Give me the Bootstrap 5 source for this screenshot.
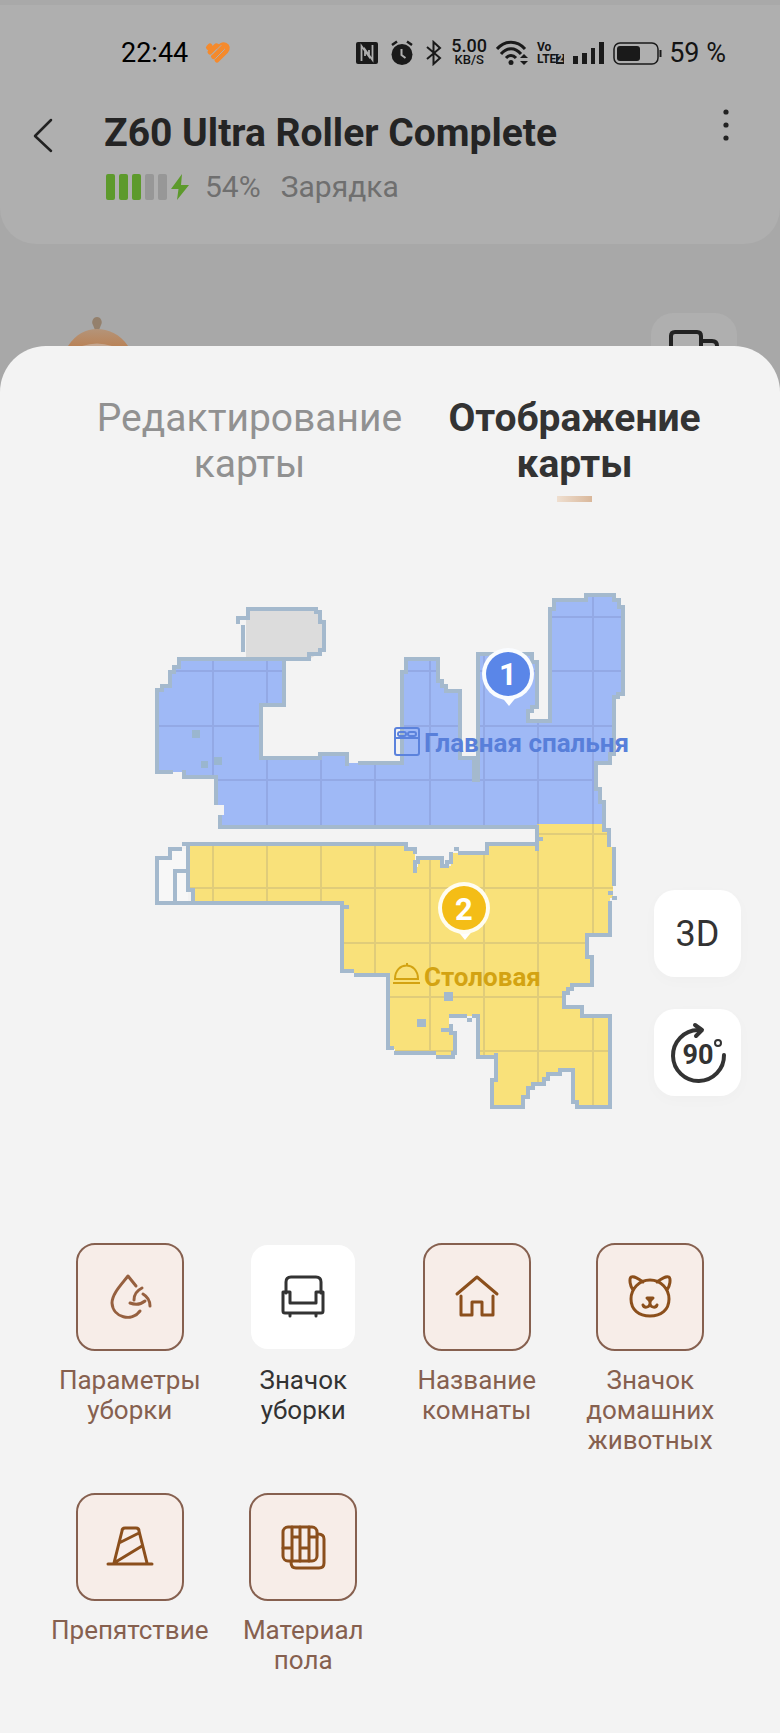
<!DOCTYPE html>
<html lang="ru">
<head>
<meta charset="utf-8">
<meta name="viewport" content="width=device-width, initial-scale=1">
<title>Z60 Ultra Roller Complete</title>
<link href="https://cdn.jsdelivr.net/npm/bootstrap@5.3.0/dist/css/bootstrap.min.css" rel="stylesheet">
<style>
  body { font-family: Roboto, "Noto Sans", sans-serif; background: #a8a8a8; color: #222; }
  button { font-family: inherit; }
  .app-head { background: #afafaf; border-top: 5px solid #a9a9a9; border-radius: 0 0 36px 36px; height: 244px; }
  .status-row { padding: 32px 54px 0 121px; height: 64px; color: #141414; }
  .clock { font-size: 27px; line-height: 32px; color: #000; }
  .charge { font-size: 27px; line-height: 32px; }
  .status-icons { gap: 9px; }
  .status-left { gap: 12px; }
  .status-power { gap: 7px; }
  .speed { font-size: 18px; line-height: 14px; font-weight: 500; text-align: center; }
  .speed small { display: block; font-size: 13px; line-height: 14px; }
  .volte { font-size: 12px; line-height: 12px; font-weight: 700; }
  .volte b { background: #1a1a1a; color: #afafaf; font-size: 10px; line-height: 10px; padding: 0 1px; }
  .title-row { padding: 33px 41px 0 32px; }
  .icon-btn { border: 0; background: none; padding: 0; line-height: 0; }
  .title-block { margin-left: 50px; }
  .device-title { font-size: 39px; line-height: 46px; font-weight: 700; color: #242424; }
  .state-row { font-size: 30px; line-height: 36px; color: #6f6f6f; margin-top: 13px; padding-left: 2px; }
  .cell { width: 9px; height: 26px; border-radius: 2px; background: #979797; }
  .cell.full { background: #5d9a2c; }
  .behind { height: 102px; padding: 0 43px 0 68px; overflow: hidden; }
  .behind-tile { width: 86px; height: 33px; border-radius: 22px 22px 0 0; background: #afafaf; }
  .sheet { background: #f3f3f3; border-radius: 46px 46px 0 0; }
  .tabs { padding: 49px 43px 0 87px; }
  .tab-btn { border: 0; background: none; padding: 0 8px; font-size: 39px; line-height: 46px; color: #919191; }
  .tab-btn.active { color: #333; font-weight: 700; }
  .tab-btn.active::after { content: ""; display: block; width: 35px; height: 6px; margin: 9px auto 0; background: linear-gradient(90deg, #efdfd0, #d9b79a); }
  .map-area { margin-top: 58px; }
  .map-tools { right: 39px; top: 330px; gap: 32px; }
  .tool-btn { width: 87px; height: 87px; border: 0; border-radius: 21px; background: #fff; color: #333; font-size: 36px; line-height: 40px; padding: 0; box-shadow: 0 4px 16px #00000005; }
  .wall { fill: none; stroke: #a4b9cd; stroke-width: 4; stroke-linecap: square; }
  .room-name { font-weight: 700; font-size: 26px; }
  .pin-no { font-weight: 700; font-size: 31px; fill: #fff; text-anchor: middle; }
  .options { padding: 103px 43px 0; row-gap: 37px; }
  .option { border: 0; background: none; padding: 0 6px; color: #86604f; font-size: 26px; line-height: 30px; min-height: 213px; }
  .option .tile { width: 108px; height: 108px; border: 2px solid #86604f; border-radius: 19px; background: #f7ede8; color: #8b4f1c; margin-bottom: 14px; }
  .option.off { color: #333; }
  .option.off .tile { background: #fff; border-color: #f3f3f3; color: #333; }
  .ico { fill: none; stroke: currentColor; stroke-width: 3; stroke-linecap: round; stroke-linejoin: round; }
</style>
</head>
<body>
<div class="d-flex flex-column min-vh-100">
  <header class="app-head">
    <div class="status-row d-flex align-items-center">
      <span class="clock">22:44</span>
      <svg class="ms-3" width="27" height="24" viewBox="0 0 27 24" fill="none" stroke="#f58a2c" stroke-width="5" stroke-linecap="round"><path d="M4.500 6.500L6 5M6 11L11.500 5.500Q13 4 14 6M9.500 15.500L18 7M13 19L22 10Q25 6 21 4Q18 3 15 7"/><path d="M8 13.500L17 4.500M11.500 17.500L20.500 8.500" stroke="#afafaf" stroke-width="1"/></svg>
      <div class="status-icons d-flex align-items-center ms-auto">
        <div class="status-left d-flex align-items-center">
          <svg width="22" height="22" viewBox="0 0 22 22"><rect width="22" height="22" rx="2" fill="#1a1a1a"/><path d="M5.500 19V4L13 14.500V8M16.500 3V18L9 7.500V14" fill="none" stroke="#afafaf" stroke-width="1.800"/></svg>
          <svg width="24" height="26" viewBox="0 0 24 26"><circle cx="12" cy="14.500" r="10.500" fill="#1a1a1a"/><path d="M2 5l5-3.500M22 5l-5-3.500" stroke="#1a1a1a" stroke-width="2.500"/><path d="M11.500 9v6l4 3" fill="none" stroke="#afafaf" stroke-width="2"/></svg>
          <svg width="16" height="26" viewBox="0 0 16 26" fill="none" stroke="#1a1a1a" stroke-width="2"><path d="M1 7l13 11-6.500 6V2L14 8 1 19"/></svg>
        </div>
        <span class="speed">5.00<small>KB/S</small></span>
        <svg width="32" height="26" viewBox="0 0 32 26"><g fill="none" stroke="#1a1a1a" stroke-width="3"><path d="M1 9C9 0 21 0 29 9M5 14c6-7 14-7 20 0M10 18c3-3.500 7-3.500 10 0"/></g><circle cx="15" cy="22.500" r="2.500" fill="#1a1a1a"/><path d="M24 18l4-4 4 4zM24 21h8l-4 4z" fill="#1a1a1a"/></svg>
        <span class="volte">Vo<br><span class="d-flex align-items-center">LTE<b>2</b></span></span>
        <svg width="31" height="22" viewBox="0 0 31 22" fill="#1a1a1a"><path d="M0 14h5v8H0zM9 11h5v11H9zM18 6h4v16h-4zM26 0h5v22h-5z"/></svg>
        <div class="status-power d-flex align-items-center">
          <svg width="49" height="23" viewBox="0 0 49 23"><rect x="1" y="1" width="44" height="21" rx="6" fill="none" stroke="#1a1a1a" stroke-width="1.500"/><rect x="4" y="4" width="23" height="15" rx="3" fill="#1a1a1a"/><path d="M47.500 8v7" stroke="#1a1a1a" stroke-width="2"/></svg>
          <span class="charge">59 %</span>
        </div>
      </div>
    </div>
    <div class="title-row d-flex align-items-start">
      <button class="icon-btn mt-3" type="button" aria-label="Назад"><svg width="22" height="36" viewBox="0 0 22 36" fill="none" stroke="#222" stroke-width="2.500" stroke-linecap="round" stroke-linejoin="round"><path d="M19 2L3 18l16 15"/></svg></button>
      <div class="title-block">
        <h1 class="device-title mb-0 mt-2">Z60 Ultra Roller Complete</h1>
        <div class="state-row d-flex align-items-center">
          <span class="d-flex gap-1 me-1"><i class="cell full"></i><i class="cell full"></i><i class="cell full"></i><i class="cell"></i><i class="cell"></i></span>
          <svg width="18" height="26" viewBox="0 0 18 26" fill="#5d9a2c"><path d="M11 0L0 15h7.500L6 26l12-15h-8z"/></svg>
          <span class="ms-3">54%</span><span class="ms-3 ps-1">Зарядка</span>
        </div>
      </div>
      <button class="icon-btn ms-auto" type="button" aria-label="Меню"><svg class="mt-1" width="32" height="42" viewBox="0 0 32 42" fill="#222"><circle cx="19" cy="6" r="2.600"/><circle cx="19" cy="19" r="2.600"/><circle cx="19" cy="32" r="2.600"/></svg></button>
    </div>
  </header>

  <div class="behind d-flex justify-content-between align-items-end">
    <svg width="60" height="30" viewBox="0 0 60 30"><defs><linearGradient id="dome" x1="0" y1="0" x2="0" y2="1"><stop offset="0" stop-color="#b49479"/><stop offset="1" stop-color="#b98358"/></linearGradient></defs><path d="M29 1c4 0 6 5 4 8l-2 5h-4l-2-5c-2-3 0-8 4-8z" fill="#94806c"/><path d="M0 30C8 18 18 13 29 13s23 5 31 17z" fill="url(#dome)"/><path d="M14 30q15-5 30 0z" fill="#c4a791"/></svg>
    <div class="behind-tile d-flex justify-content-center align-items-end"><svg width="54" height="16" viewBox="0 0 54 16" fill="none" stroke="#222" stroke-width="4"><path d="M4 16V6q0-4 4-4h22q4 0 4 4v10M34 11h11q5 0 5 5"/></svg></div>
  </div>

  <main class="sheet flex-grow-1 pb-4">
    <div class="tabs d-flex align-items-start" role="tablist">
      <button class="tab-btn w-50" type="button" role="tab" aria-selected="false">Редактирование карты</button>
      <button class="tab-btn w-50 active" type="button" role="tab" aria-selected="true">Отображение карты</button>
    </div>

    <div class="map-area position-relative">
      <svg class="d-block w-100" viewBox="0 560 780 580" role="img" aria-label="Карта">
        <defs>
          <path id="blue" d="M179 659H284V705H261V758H320V754H347V763H402V672H406V659H438V681H442V686H446V691H460V758H478V654H532V662H537V707H532V711H528V721H550V609H554V600H586V595H614V600H619V607H623V694H618V697H614V754H610V763H596V789H600V802H604V826H537V827H220V815H224V805H216V777H184V772H157V690H162V686H170V672H174V667H179Z"/>
          <path id="gold" d="M188 844H406V849H415V867H418V858H442V866H451V853H487V844H537V824H604V830H609V847H613V898H610V935H587V957H592V985H572V989H568V993H564V1007H582V1016H610V1107H577V1102H573V1070H560V1074H548V1079H544V1084H533V1088H528V1097H523V1107H492V1080H496V1057H478V1016H449V1030H451V1033H455V1053H453V1057H436V1053H395V1049H388V975H354V971H342V903H193V890H188Z"/>
          <clipPath id="rooms"><use href="#blue"/><use href="#gold"/></clipPath>
        </defs>
        <path d="M246 609H316L324 622V651L309 659H246Z" fill="#dcdcdc"/>
        <path class="wall" d="M238 622V618H248V609H316V612H320V622H324V650H320V654H309V659H284M243 627V650"/>
        <path d="M157 858H170V849H188V903H157Z" fill="#f7f7f7"/>
        <use href="#blue" fill="#9fb9f6"/>
        <use href="#gold" fill="#f9e17a"/>
        <g clip-path="url(#rooms)" stroke="#505080" stroke-opacity=".14" stroke-width="2">
          <path d="M213 580V1120M267 580V1120M321 580V1120M375 580V1120M430 580V1120M484 580V1120M538 580V1120M593 580V1120M150 617H630M150 671H630M150 726H630M150 780H630M150 834H630M150 888H630M150 943H630M150 997H630M150 1051H630"/>
        </g>
        <path class="wall" d="M220 827V817M216 803V777H184V772M171 772H157V690H162V686H170V672H174V667H179V659H284V705H261V758H320V754H347V764M360 763H402V672H406V659H438V681H442V686H446V691H460V758H474M478 654V780M474 760V780M478 654H532V662H537V707H532V711H528V721H550V609H554V600H586V595H614V600H619V607H623V694H618V697H614V754H610V763H596V789H600V802H604V830H609V845M220 827H537V849M541 839H538"/>
        <path class="wall" d="M184 844H406V849H415V852M415 871V862H418V858H442V866H447V862H451V854M456 849H457M460 853H487V844H537M614 849V884M610 893H611M614 898H615M610 903V935H587V957H592V985H572V989H568V993H564V1007H582V1016H610V1107H577V1102H573V1070H560V1074H548V1079H544V1084H533V1088H528V1097H523V1107H492V1080H496V1055M496 1057H478V1016H474M469 1020H470M465 1016H451M451 1026V1030H443M451 1033H455V1053H453V1057H438M434 1053H396M392 1048H388V975H356M352 971H342V907H347M342 903H157V858H170V849H180M188 844V890H193V903M188 871H175V903"/>
        <path d="M444 992h9v9h-9zM417 1019h9v8h-9z" fill="#a4b9cd"/>
        <path d="M192 730h8v8h-8zM214 757h8v8h-8zM201 761h7v7h-7z" fill="#9ab6cf"/>

        <g>
          <path d="M500 695H518L509 706Z" fill="#fff"/><circle cx="508" cy="674" r="26" fill="#fafcff"/><circle cx="508" cy="674" r="22" fill="#5a86e8"/>
          <text class="pin-no" x="508" y="685">1</text>
          <g fill="none" stroke="#5b82dc" stroke-width="2"><rect x="395" y="728" width="24" height="27" rx="2"/><path d="M395 738H419"/><rect x="398" y="732" width="8" height="4" rx="2"/><rect x="408" y="732" width="8" height="4" rx="2"/></g>
          <text class="room-name" x="424" y="752" fill="#587fda">Главная спальня</text>
        </g>
        <g>
          <path d="M456 929H474L465 940Z" fill="#fff"/><circle cx="464" cy="908" r="26" fill="#fffdf0"/><circle cx="464" cy="908" r="22" fill="#f4bd16"/>
          <text class="pin-no" x="464" y="920">2</text>
          <g fill="none" stroke="#d3a312" stroke-width="2"><path d="M395 979C395 961 418 961 418 979ZM407 966V963M393 983H420"/></g>
          <text class="room-name" x="424" y="986" fill="#d3a312">Столовая</text>
        </g>
      </svg>
      <div class="map-tools position-absolute d-flex flex-column">
        <button class="tool-btn" type="button">3D</button>
        <button class="tool-btn" type="button" aria-label="Повернуть на 90°"><svg width="62" height="62" viewBox="0 0 62 62"><path d="M57 33A25.500 25.500 0 1 1 31 8H34" fill="none" stroke="#333" stroke-width="4" stroke-linecap="round"/><path d="M28 3L35 8L29 14" fill="none" stroke="#333" stroke-width="4" stroke-linecap="round" stroke-linejoin="round"/><text x="31" y="42" text-anchor="middle" font-size="27" font-weight="700" fill="#333">90</text><circle cx="51" cy="21" r="3" fill="none" stroke="#333" stroke-width="2"/></svg></button>
      </div>
    </div>

    <div class="options row g-0">
      <div class="col-3 d-flex"><button class="option w-100 d-flex flex-column align-items-center" type="button" aria-pressed="true">
        <span class="tile d-flex align-items-center justify-content-center"><svg class="ico" width="48" height="48" viewBox="0 0 48 48"><path stroke="#96603f" d="M30 13L22 3C15 12 6 21 6 30C7 45 26 49 34 38M36 15C30 18 28 22 28 27M37 21C42 24 44 28 44 33M24 30C29 32 34 32 39 28"/></svg></span>Параметры уборки</button></div>
      <div class="col-3 d-flex"><button class="option off w-100 d-flex flex-column align-items-center" type="button" aria-pressed="false">
        <span class="tile d-flex align-items-center justify-content-center"><svg class="ico" width="48" height="48" viewBox="0 0 48 48"><path d="M7 20V9Q7 4 12 4H37Q42 4 42 9V20M4 19H11V30H37V19H44V38Q44 40 42 40H6Q4 40 4 38ZM11 41V43M37 41V43"/></svg></span>Значок уборки</button></div>
      <div class="col-3 d-flex"><button class="option w-100 d-flex flex-column align-items-center" type="button" aria-pressed="true">
        <span class="tile d-flex align-items-center justify-content-center"><svg class="ico" width="48" height="48" viewBox="0 0 48 48"><path d="M4 21L24 4L44 21M8 23V42H19V29H29V42H40V23"/></svg></span>Название комнаты</button></div>
      <div class="col-3 d-flex"><button class="option w-100 d-flex flex-column align-items-center" type="button" aria-pressed="true">
        <span class="tile d-flex align-items-center justify-content-center"><svg class="ico" width="48" height="48" viewBox="0 0 48 48"><path d="M17 9C12 5 7 3 5 4C3 6 4 13 7 17M31 9C36 5 41 3 43 4C45 6 44 13 41 17M24 7C13 7 5 16 5 26C5 37 13 43 24 43S43 37 43 26C43 16 35 7 24 7M24 28V31C23 35 18 35 17 32M24 31C25 35 30 35 31 32"/><path d="M21 25H27L24 28Z" fill="currentColor"/></svg></span>Значок домашних животных</button></div>
      <div class="col-3 d-flex"><button class="option w-100 d-flex flex-column align-items-center" type="button" aria-pressed="true">
        <span class="tile d-flex align-items-center justify-content-center"><svg class="ico" width="48" height="48" viewBox="0 0 48 48"><path d="M2 41H46M8 40L16 8Q16 5 19 5H30Q33 5 33 8L41 40M13 20L33 10M8 40L36 23"/></svg></span>Препятствие</button></div>
      <div class="col-3 d-flex"><button class="option w-100 d-flex flex-column align-items-center" type="button" aria-pressed="true">
        <span class="tile d-flex align-items-center justify-content-center"><svg class="ico" width="48" height="48" viewBox="0 0 48 48"><rect x="4" y="4" width="34" height="34" rx="5"/><path d="M13 4V38M21 4V38M30 4V38M4 25H13M13 14H21M21 25H30M30 14H38M39 11Q45 11 45 16V40Q45 45 40 45H17Q12 45 12 39"/></svg></span>Материал пола</button></div>
    </div>
  </main>
</div>
<script src="https://cdn.jsdelivr.net/npm/bootstrap@5.3.0/dist/js/bootstrap.bundle.min.js"></script>
</body>
</html>
